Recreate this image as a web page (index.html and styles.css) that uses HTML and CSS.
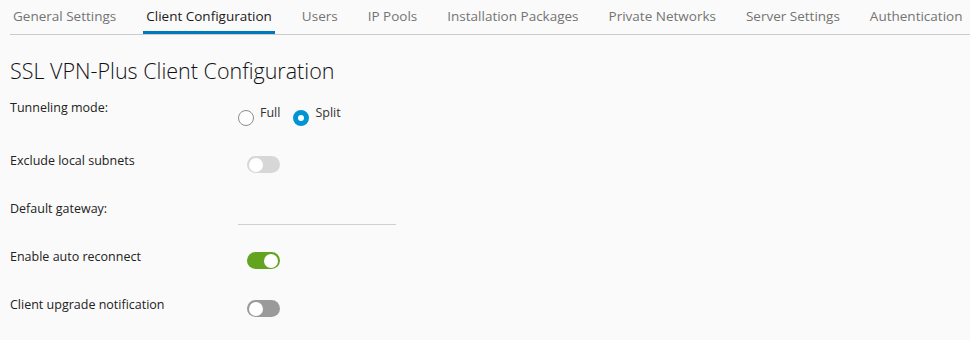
FILE: index.html
```html
<!DOCTYPE html>
<html>
<head>
<meta charset="utf-8">
<link rel="stylesheet" href="styles.css">
</head>
<body>
<div class="page">
  <nav class="tabs">
    <a class="tab">General Settings</a>
    <a class="tab active">Client Configuration</a>
    <a class="tab">Users</a>
    <a class="tab">IP Pools</a>
    <a class="tab">Installation Packages</a>
    <a class="tab">Private Networks</a>
    <a class="tab">Server Settings</a>
    <a class="tab">Authentication</a>
  </nav>
  <h3 class="title">SSL VPN-Plus Client Configuration</h3>
  <div class="form">
    <div class="row first">
      <div class="label">Tunneling mode:</div>
      <div class="control radios">
        <label class="radio"><span class="circle"></span><span class="rtext">Full</span></label>
        <label class="radio"><span class="circle checked"></span><span class="rtext">Split</span></label>
      </div>
    </div>
    <div class="row">
      <div class="label">Exclude local subnets</div>
      <div class="control"><span class="toggle disabled"><span class="knob"></span></span></div>
    </div>
    <div class="row">
      <div class="label">Default gateway:</div>
      <div class="control"><span class="input"></span></div>
    </div>
    <div class="row">
      <div class="label">Enable auto reconnect</div>
      <div class="control"><span class="toggle on"><span class="knob"></span></span></div>
    </div>
    <div class="row">
      <div class="label">Client upgrade notification</div>
      <div class="control"><span class="toggle off"><span class="knob"></span></span></div>
    </div>
  </div>
</div>
</body>
</html>
```

FILE: styles.css
```css
html, body {
  margin: 0;
  padding: 0;
  background: #fafafa;
}
body {
  font-family: "Open Sans", "Liberation Sans", sans-serif;
  color: #222;
}
.page {
  padding: 0 0 0 10px;
}
.tabs {
  display: flex;
  border-bottom: 1px solid #ccc;
  height: 34px;
}
.tab {
  display: block;
  padding: 1px 3px 0 3px;
  margin-right: 24px;
  font-size: 13.5px;
  line-height: 31px;
  height: 30px;
  border-bottom: 3px solid transparent;
  color: #747474;
  white-space: nowrap;
}
.tab.active {
  color: #1b1b1b;
  border-bottom-color: #0079b8;
}
.title {
  margin: 20px 0 0 0;
  font-size: 21.5px;
  font-weight: 300;
  line-height: 32px;
  height: 32px;
  color: #111;
}
.form {
  margin-top: 9px;
}
.row {
  display: grid;
  grid-template-columns: 228px 1fr;
  height: 48px;
}
.row.first {
  height: 53px;
}
.label {
  font-size: 12.5px;
  line-height: 24px;
  color: #222;
}
.radios {
  display: flex;
  padding-top: 8px;
  gap: 12px;
}
.radio {
  display: flex;
  align-items: flex-start;
}
.circle {
  box-sizing: border-box;
  width: 16px;
  height: 16px;
  border-radius: 50%;
  border: 1px solid #8c8c8c;
  background: #fff;
  margin-top: 6px;
  margin-right: 6px;
}
.circle.checked {
  border: 5.5px solid #0094d2;
  background: #fff;
}
.radio + .radio .circle {
  margin-left: 1px;
}
.rtext {
  font-size: 12.5px;
  line-height: 18px;
  color: #333;
}
.toggle {
  display: block;
  box-sizing: border-box;
  width: 33px;
  height: 17px;
  border-radius: 9px;
  margin: 7px 0 0 9px;
  position: relative;
}
.toggle .knob {
  position: absolute;
  top: 1.5px;
  width: 14px;
  height: 14px;
  border-radius: 50%;
  background: #fff;
}
.toggle.disabled { background: #d7d7d7; }
.toggle.disabled .knob { left: 2px; }
.toggle.on { background: #62a420; }
.toggle.on .knob { right: 2px; }
.toggle.off { background: #9a9a9a; }
.toggle.off .knob { left: 2px; }
.input {
  display: block;
  box-sizing: border-box;
  width: 158px;
  height: 24px;
  margin-top: 4px;
  border-bottom: 1px solid #cfcfcf;
}
```
